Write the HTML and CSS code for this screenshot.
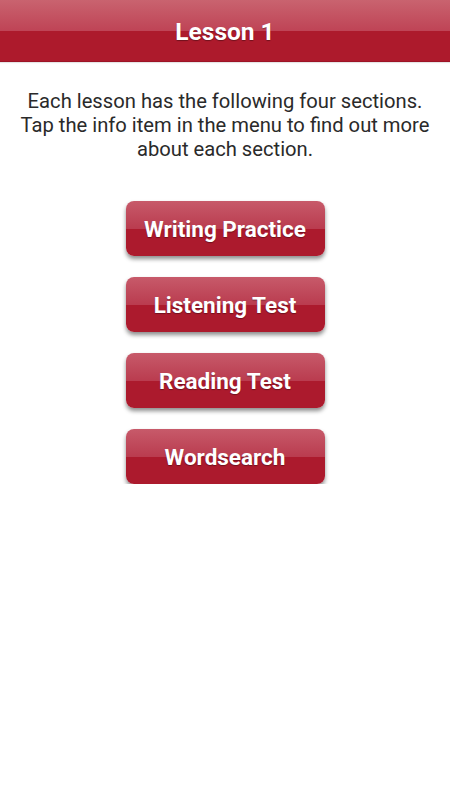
FILE: index.html
```html
<!DOCTYPE html>
<html lang="en">
<head>
    <meta charset="UTF-8">
    <meta name="viewport" content="width=device-width, initial-scale=1.0">
    <title>Lesson 1</title>
    <link rel="stylesheet" href="styles.css">
</head>
<body>
    <header class="top-bar">
        <div class="top-title">Lesson 1</div>
    </header>
    <div class="content">
        <p class="intro">Each lesson has the following four sections.<br>Tap the info item in the menu to find out more<br>about each section.</p>
        <div class="menu">
            <button class="menu-btn">Writing Practice</button>
            <button class="menu-btn">Listening Test</button>
            <button class="menu-btn">Reading Test</button>
            <button class="menu-btn">Wordsearch</button>
        </div>
    </div>
</body>
</html>
```

FILE: styles.css
```css
body {
    font-family: Roboto, sans-serif;
    background-color: #fff;
    margin: 0;
    padding: 0;
}

.top-bar {
    height: 61px;
    background: linear-gradient(to bottom, #c9636f 0%, #bf4456 50%, #ad1a2c 50%, #ad1a2c 100%);
    border-bottom: 1px solid #9c1426;
    box-shadow: 0 1px 1px rgba(0, 0, 0, 0.1);
    display: flex;
    align-items: center;
    justify-content: center;
}

.top-title {
    color: #fff;
    font-size: 24.5px;
    font-weight: bold;
    padding-top: 2px;
    text-shadow: 0 1px 1px rgba(0, 0, 0, 0.35);
}

.content {
    display: flex;
    flex-direction: column;
    align-items: center;
    padding-top: 27px;
}

.intro {
    margin: 0;
    font-size: 20.2px;
    line-height: 24px;
    color: #2a2a2a;
    text-align: center;
}

.menu {
    display: flex;
    flex-direction: column;
    gap: 21px;
    margin-top: 40px;
}

.menu-btn {
    width: 199px;
    height: 55px;
    border: none;
    border-radius: 8px;
    background: linear-gradient(to bottom, #c75a6a 0%, #ba3c4f 50%, #ac1a2d 50%, #ac1a2d 100%);
    box-shadow: 0 3px 4px rgba(0, 0, 0, 0.45);
    color: #fff;
    font-family: Roboto, sans-serif;
    font-size: 22.5px;
    font-weight: bold;
    text-shadow: 0 1px 1px rgba(0, 0, 0, 0.35);
    cursor: pointer;
    padding: 0;
}
```
